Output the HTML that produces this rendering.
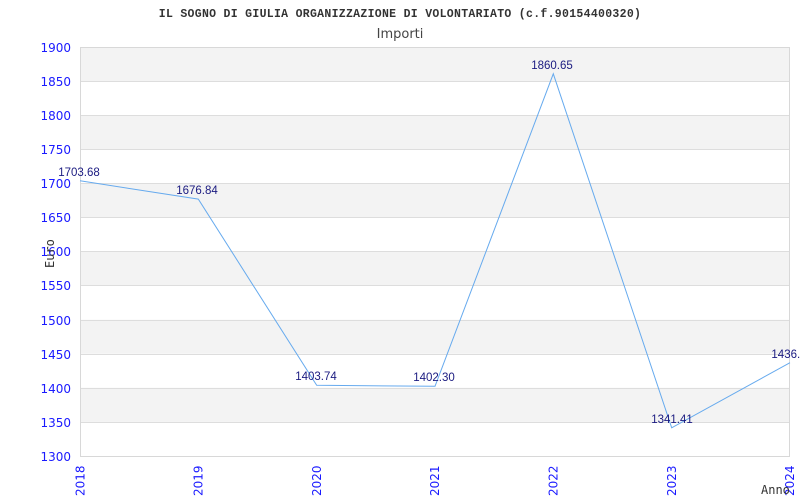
<!DOCTYPE html>
<html><head><style>body{margin:0;background:#fff}svg{display:block}</style></head><body>
<svg width="800" height="500" xmlns="http://www.w3.org/2000/svg">
<rect width="800" height="500" fill="#fff"/>
<g fill="#f3f3f3">
<rect x="80" y="47" width="710" height="34.1"/>
<rect x="80" y="115.2" width="710" height="34.1"/>
<rect x="80" y="183.3" width="710" height="34.1"/>
<rect x="80" y="251.5" width="710" height="34.1"/>
<rect x="80" y="319.7" width="710" height="34.1"/>
<rect x="80" y="387.8" width="710" height="34.1"/>
</g>
<g stroke="#dddddd" stroke-width="1">
<line x1="80" y1="81.5" x2="790" y2="81.5"/><line x1="80" y1="115.5" x2="790" y2="115.5"/>
<line x1="80" y1="149.5" x2="790" y2="149.5"/><line x1="80" y1="183.5" x2="790" y2="183.5"/>
<line x1="80" y1="217.5" x2="790" y2="217.5"/><line x1="80" y1="251.5" x2="790" y2="251.5"/>
<line x1="80" y1="285.5" x2="790" y2="285.5"/><line x1="80" y1="320.5" x2="790" y2="320.5"/>
<line x1="80" y1="354.5" x2="790" y2="354.5"/><line x1="80" y1="388.5" x2="790" y2="388.5"/>
<line x1="80" y1="422.5" x2="790" y2="422.5"/>
</g>
<rect x="80.5" y="47.5" width="709" height="409" fill="none" stroke="#d8d8d8"/>
<text x="400" y="17" text-anchor="middle" font-family="Liberation Mono,monospace" font-weight="bold" font-size="11.5" letter-spacing="0.3" fill="#333">IL SOGNO DI GIULIA ORGANIZZAZIONE DI VOLONTARIATO (c.f.90154400320)</text>
<text x="400" y="38" text-anchor="middle" font-family="DejaVu Sans,sans-serif" font-size="13" fill="#444">Importi</text>
<g font-family="DejaVu Sans,sans-serif" font-size="12" fill="#1a1aff" text-anchor="end">
<text x="71" y="52">1900</text><text x="71" y="86">1850</text><text x="71" y="120">1800</text>
<text x="71" y="154">1750</text><text x="71" y="188">1700</text><text x="71" y="222">1650</text>
<text x="71" y="256">1600</text><text x="71" y="290">1550</text><text x="71" y="325">1500</text>
<text x="71" y="359">1450</text><text x="71" y="393">1400</text><text x="71" y="427">1350</text>
<text x="71" y="461">1300</text>
</g>
<g font-family="DejaVu Sans,sans-serif" font-size="12" fill="#1a1aff">
<text transform="translate(84.5,496) rotate(-90)">2018</text>
<text transform="translate(202.5,496) rotate(-90)">2019</text>
<text transform="translate(321,496) rotate(-90)">2020</text>
<text transform="translate(439,496) rotate(-90)">2021</text>
<text transform="translate(557.5,496) rotate(-90)">2022</text>
<text transform="translate(676,496) rotate(-90)">2023</text>
<text transform="translate(794,496) rotate(-90)">2024</text>
</g>
<text transform="translate(54,268) rotate(-90)" font-family="DejaVu Sans Mono,monospace" font-size="12" fill="#333">Euro</text>
<text x="761" y="494" font-family="DejaVu Sans Mono,monospace" font-size="12" fill="#333">Anno</text>
<polyline fill="none" stroke="#66aaee" stroke-width="1" points="80,180.8 198.3,199.1 316.7,385.3 435,386.3 553.3,73.8 671.7,427.8 790,362.7"/>
<g font-family="Liberation Sans,sans-serif" font-size="11.5" fill="#1a1a80" text-anchor="middle">
<text x="79" y="176">1703.68</text><text x="197" y="194">1676.84</text>
<text x="316" y="380">1403.74</text><text x="434" y="381">1402.30</text>
<text x="552" y="69">1860.65</text><text x="672" y="423">1341.41</text>
<text x="789" y="358">1436.9</text>
</g>
</svg>
</body></html>
